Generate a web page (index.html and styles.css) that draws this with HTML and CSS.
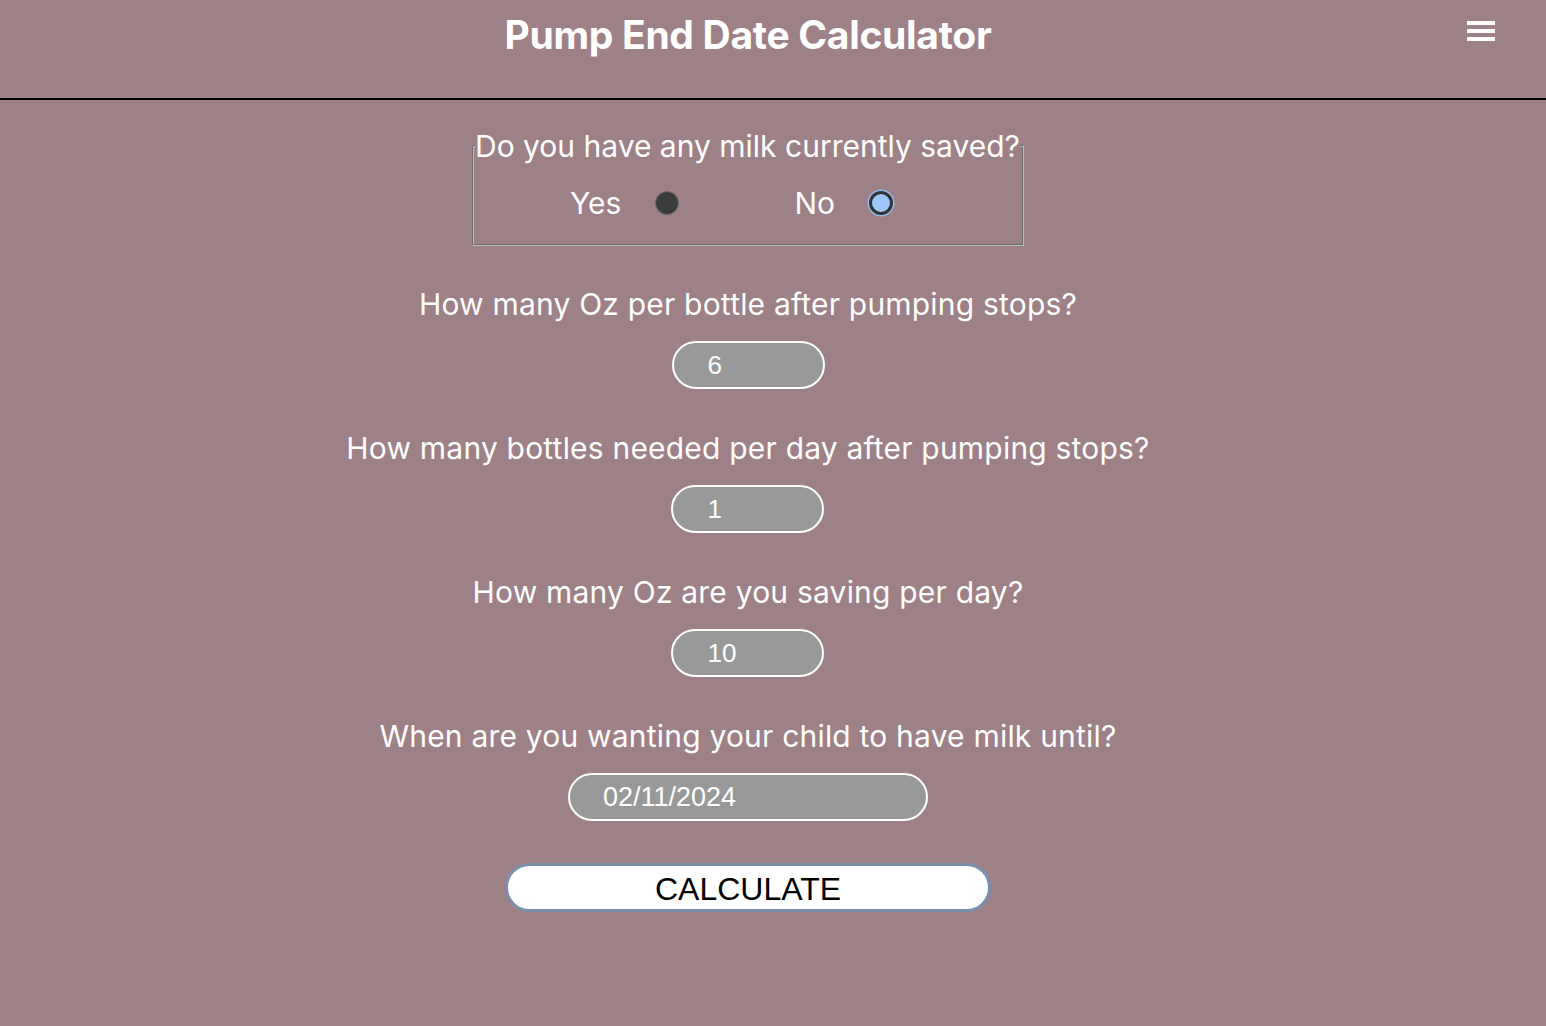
FILE: index.html
```html
<!DOCTYPE html>
<html>
<head>
<meta charset="utf-8">
<title>Pump End Date Calculator</title>
<link rel="stylesheet" href="styles.css">
</head>
<body>
<header class="topbar">
  <h1 class="title">Pump End Date Calculator</h1>
  <button class="menu" aria-label="Menu"><span></span><span></span><span></span></button>
</header>
<main class="form">
  <fieldset class="saved">
    <legend class="saved-legend">Do you have any milk currently saved?</legend>
    <div class="radios">
      <label class="radio-group">Yes <span class="radio radio-yes"></span></label>
      <label class="radio-group">No <span class="radio radio-no"></span></label>
    </div>
  </fieldset>
  <div class="question">
    <label class="q-label">How many Oz per bottle after pumping stops?</label>
    <div class="field field-num">6</div>
  </div>
  <div class="question">
    <label class="q-label">How many bottles needed per day after pumping stops?</label>
    <div class="field field-num">1</div>
  </div>
  <div class="question">
    <label class="q-label">How many Oz are you saving per day?</label>
    <div class="field field-num">10</div>
  </div>
  <div class="question">
    <label class="q-label">When are you wanting your child to have milk until?</label>
    <div class="field field-date">02/11/2024</div>
  </div>
  <button class="calc">CALCULATE</button>
</main>
</body>
</html>
```
FILE: styles.css
```css
html, body {
  margin: 0;
  padding: 0;
}
body {
  background: #9e8087;
  min-height: 1026px;
  font-family: Inter, "Liberation Sans", sans-serif;
  color: #fff;
}
.topbar {
  position: relative;
  height: 98px;
  border-bottom: 2px solid #000;
  display: flex;
  justify-content: center;
  padding-right: 50px;
}
.title {
  margin: 12px 0 0;
  font-size: 39px;
  font-weight: 700;
  line-height: 46px;
  letter-spacing: -0.3px;
}
.menu {
  position: absolute;
  top: 21px;
  right: 51px;
  width: 28px;
  height: 20px;
  padding: 0;
  border: 0;
  background: none;
  display: flex;
  flex-direction: column;
  justify-content: space-between;
}
.menu span {
  display: block;
  height: 4px;
  background: #fff;
}
.form {
  display: flex;
  flex-direction: column;
  align-items: center;
  padding-top: 29px;
  padding-right: 50px;
}
.saved {
  width: 552px;
  box-sizing: border-box;
  margin: 0;
  padding: 0;
  height: 117px;
  border: 2px groove #c0c0c0;
}
.saved-legend {
  padding: 0;
  font-size: 30px;
  line-height: 34px;
  margin-left: 1px;
}
.radios {
  display: flex;
  align-items: center;
  padding-left: 96px;
  gap: 115px;
  margin-top: 23px;
}
.radio-group {
  display: flex;
  align-items: center;
  gap: 34px;
  font-size: 30px;
  line-height: 34px;
}
.radio {
  display: inline-block;
  width: 24px;
  height: 24px;
  box-sizing: border-box;
  border-radius: 50%;
}
.radio-yes {
  background: #3b3b3b;
  border: 1px solid #6e6e6e;
}
.radio-no {
  background: #9cc7fa;
  border: 3px solid #333;
  box-shadow: 0 0 0 1.5px #8fbaf2;
}
.question {
  display: flex;
  flex-direction: column;
  align-items: center;
}
.question:first-of-type {
  margin-top: 38px;
}
.q-label {
  font-size: 30px;
  line-height: 40px;
  letter-spacing: 0.2px;
}
.field {
  box-sizing: border-box;
  height: 48px;
  margin-top: 17px;
  margin-bottom: 39px;
  background: #999;
  border: 2px solid #fff;
  border-radius: 24px;
  font-family: "Liberation Sans", Arial, sans-serif;
  font-size: 26px;
  line-height: 44px;
  color: #fff;
}
.field-num {
  width: 153px;
  padding-left: 34px;
}
.field-date {
  width: 360px;
  padding-left: 33px;
  font-size: 27px;
}
.calc {
  margin-top: 3px;
  width: 486px;
  height: 49px;
  box-sizing: border-box;
  background: #fff;
  border: 3px solid #7a8fab;
  border-radius: 25px;
  font-family: "Liberation Sans", Arial, sans-serif;
  font-size: 32px;
  color: #000;
  padding: 0;
  line-height: 46px;
}
```
